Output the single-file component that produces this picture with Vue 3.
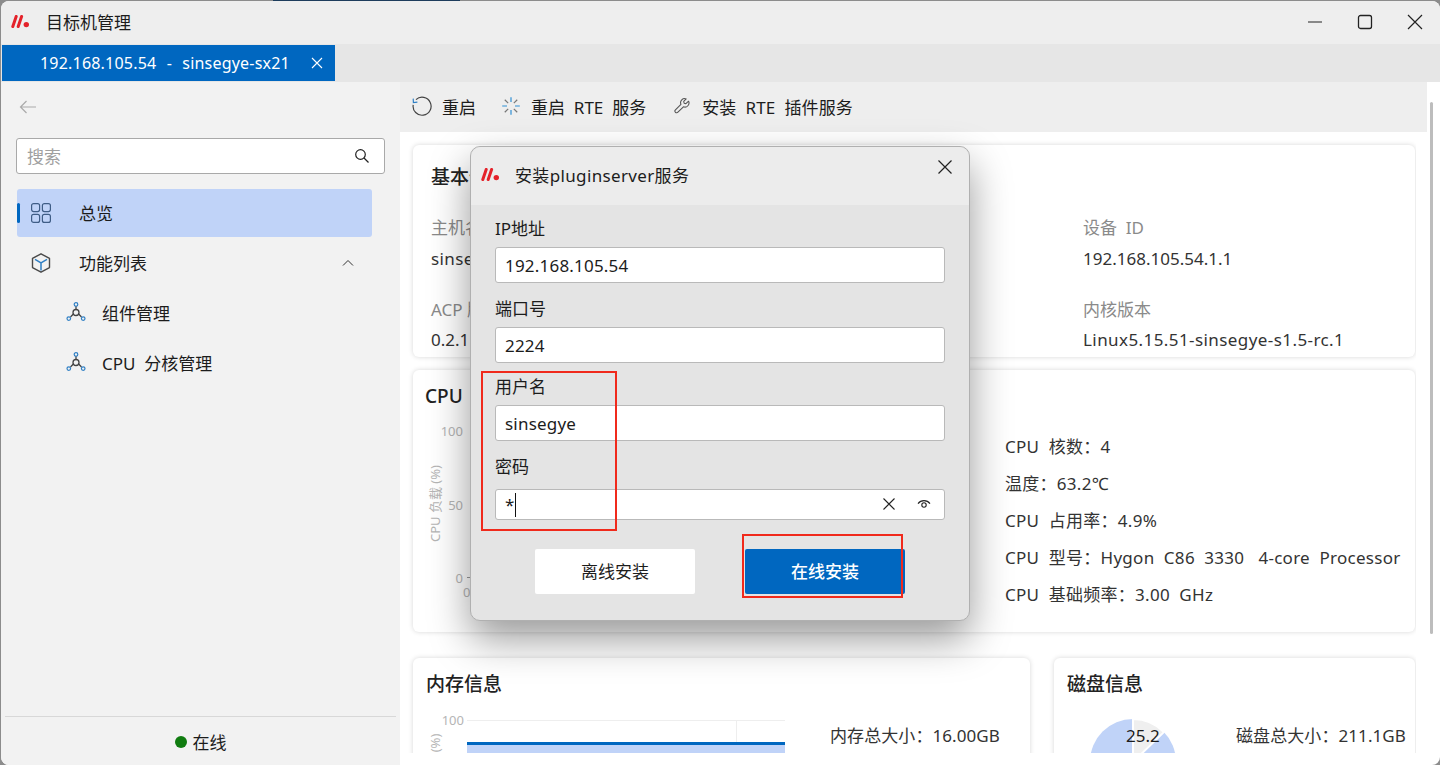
<script setup>
const tabLabel = '192.168.105.54  -  sinsegye-sx21'
const restartRte = '重启  RTE  服务'
const installRte = '安装  RTE  插件服务'
const sideSubs = ['组件管理', 'CPU  分核管理']
const basicLeft = [
  { label: '主机名称', value: 'sinsegye-sx21', wide: true },
  { label: 'ACP 版本', value: '0.2.1' },
]
const basicRight = [
  { label: '设备  ID', value: '192.168.105.54.1.1' },
  { label: '内核版本', value: 'Linux5.15.51-sinsegye-s1.5-rc.1', wide: true },
]
const cpuRows = [
  'CPU  核数\uff1a4',
  '温度\uff1a63.2℃',
  'CPU  占用率\uff1a4.9%',
  'CPU  型号\uff1aHygon  C86  3330   4-core  Processor',
  'CPU  基础频率\uff1a3.00  GHz',
]
const memStat = '内存总大小\uff1a16.00GB'
const diskStat = '磁盘总大小\uff1a211.1GB'
const rays = [0, 45, 90, 135, 180, 225, 270, 315]
</script>

<template>
  <div class="screen">
    <div class="taskedge"></div>
    <div class="window">
      <header class="titlebar">
        <svg class="logo" viewBox="0 0 18 13" width="18" height="13">
          <path d="M5.2 1.5L1.8 11.5M10.6 1.5L7.2 11.5" fill="none" stroke="#e4222a" stroke-width="3" stroke-linecap="round" />
          <circle cx="15.3" cy="9.6" r="2.7" fill="#e4222a" />
        </svg>
        <span class="apptitle">目标机管理</span>
        <div class="winctl">
          <svg viewBox="0 0 16 16" width="16" height="16"><path d="M1 8H15" stroke="#222" stroke-width="1.2" /></svg>
          <svg viewBox="0 0 16 16" width="16" height="16"><rect x="1.5" y="1.5" width="13" height="13" rx="2" fill="none" stroke="#222" stroke-width="1.3" /></svg>
          <svg viewBox="0 0 16 16" width="16" height="16"><path d="M1 1L15 15M15 1L1 15" stroke="#222" stroke-width="1.2" /></svg>
        </div>
      </header>

      <div class="tabbar">
        <div class="tab">
          <span class="tabtext">{{ tabLabel }}</span>
          <svg viewBox="0 0 12 12" width="12" height="12"><path d="M1 1L11 11M11 1L1 11" stroke="#fff" stroke-width="1.1" /></svg>
        </div>
      </div>

      <div class="body">
        <aside class="sidebar">
          <svg class="back" viewBox="0 0 18 14" width="18" height="14"><path d="M17 7H1.5M7.5 1L1.5 7L7.5 13" fill="none" stroke="#aaa" stroke-width="1.2" /></svg>
          <div class="search">
            <span class="placeholder">搜索</span>
            <svg viewBox="0 0 16 16" width="16" height="16"><circle cx="6.5" cy="6.5" r="4.8" fill="none" stroke="#222" stroke-width="1.2" /><path d="M10 10L14.5 14.5" stroke="#222" stroke-width="1.3" /></svg>
          </div>
          <div class="navitem active">
            <span class="indicator"></span>
            <svg class="navicon" viewBox="0 0 20 20" width="20" height="20">
              <rect x="0.6" y="0.6" width="8" height="8" rx="2" fill="none" stroke="#3f5d86" stroke-width="1.2" />
              <rect x="11.4" y="0.6" width="8" height="8" rx="2" fill="none" stroke="#3f5d86" stroke-width="1.2" />
              <rect x="0.6" y="11.4" width="8" height="8" rx="2" fill="none" stroke="#3f5d86" stroke-width="1.2" />
              <rect x="11.4" y="11.4" width="8" height="8" rx="2" fill="none" stroke="#3f5d86" stroke-width="1.2" />
            </svg>
            <span class="navtext">总览</span>
          </div>
          <div class="navitem">
            <svg class="navicon" viewBox="0 0 20 20" width="20" height="20">
              <path d="M10 0.8L18.5 5.4V14.6L10 19.2L1.5 14.6V5.4Z" fill="none" stroke="#4a4a4a" stroke-width="1.4" stroke-linejoin="round" />
              <path d="M4 6.4L10 10L16 6.4M10 10V17.5" fill="none" stroke="#2f7fc4" stroke-width="1.5" />
            </svg>
            <span class="navtext grow">功能列表</span>
            <svg class="chev" viewBox="0 0 12 8" width="12" height="8"><path d="M1 6.5L6 1.5L11 6.5" fill="none" stroke="#333" stroke-width="1" /></svg>
          </div>
          <div v-for="s in sideSubs" :key="s" class="subitem">
            <svg viewBox="0 0 20 20" width="20" height="20">
              <path d="M10 4V8M7.8 11.5L4.5 15M12.2 11.5L15.5 15" stroke="#444" stroke-width="1.3" />
              <circle cx="10" cy="10.5" r="3" fill="none" stroke="#444" stroke-width="1.3" />
              <circle cx="10" cy="2.4" r="1.8" fill="none" stroke="#2f7fc4" stroke-width="1.2" />
              <circle cx="2.8" cy="16.6" r="1.8" fill="none" stroke="#2f7fc4" stroke-width="1.2" />
              <circle cx="17.2" cy="16.6" r="1.8" fill="none" stroke="#2f7fc4" stroke-width="1.2" />
            </svg>
            <span>{{ s }}</span>
          </div>
          <div class="sidefoot">
            <span class="dot"></span><span>在线</span>
          </div>
        </aside>

        <main class="main">
          <div class="toolbar">
            <button class="tool">
              <svg viewBox="0 0 20 20" width="20" height="20">
                <path d="M4 3.6A9 9 0 1 1 1.2 8.8" fill="none" stroke="#444" stroke-width="1.2" />
                <path d="M1.2 2.6L1.4 6.6L5.4 6.2" fill="none" stroke="#2f7fc4" stroke-width="1.2" />
              </svg>
              <span>重启</span>
            </button>
            <button class="tool">
              <svg viewBox="0 0 20 20" width="20" height="20">
                <g v-for="(r, i) in rays" :key="r" :transform="`rotate(${r} 10 10)`">
                  <path d="M10 1.2V6" :stroke="i % 2 ? '#777' : '#2f8fd4'" stroke-width="1.2" />
                </g>
              </svg>
              <span>{{ restartRte }}</span>
            </button>
            <button class="tool">
              <svg class="wrench" viewBox="0 0 18 18" width="16" height="16">
                <path d="M16.4 3.6L13.4 6.4L11.4 5.8L10.9 3.8L13.7 1A4.6 4.6 0 0 0 7.8 7.1L1.6 13.3A1.9 1.9 0 0 0 4.4 16L10.6 9.9A4.6 4.6 0 0 0 16.4 3.6Z" fill="none" stroke="#555" stroke-width="1.2" stroke-linejoin="round" />
              </svg>
              <span class="tool-wide">{{ installRte }}</span>
            </button>
          </div>

          <div class="content">
            <section class="card basic">
              <h3 class="basic-title">基本信息</h3>
              <div class="basic-grid">
                <div class="col">
                  <div v-for="b in basicLeft" :key="b.label" class="kv">
                    <span class="k">{{ b.label }}</span><span class="v" :class="{ wide: b.wide }">{{ b.value }}</span>
                  </div>
                </div>
                <div class="col">
                  <div v-for="b in basicRight" :key="b.label" class="kv">
                    <span class="k">{{ b.label }}</span><span class="v" :class="{ wide: b.wide }">{{ b.value }}</span>
                  </div>
                </div>
              </div>
            </section>

            <section class="card cpu">
              <h3 class="cpu-title">CPU</h3>
              <div class="cpu-axis">
                <span class="ylabel">CPU 负载 (%)</span>
                <div class="ticks">
                  <span>100</span><span>50</span><span>0</span>
                </div>
                <i class="tick0"></i>
                <span class="x0">0</span>
              </div>
              <ul class="cpu-list">
                <li v-for="r in cpuRows" :key="r">{{ r }}</li>
              </ul>
            </section>

            <div class="lower">
              <section class="card mem">
                <h3>内存信息</h3>
                <div class="mem-row">
                  <div class="mem-axis"><span class="ylabel2">(%)</span><span class="t100">100</span></div>
                  <div class="plot"><span class="gridv"></span><div class="area"></div></div>
                  <div class="stat mem-stat">{{ memStat }}</div>
                </div>
              </section>
              <section class="card disk">
                <h3>磁盘信息</h3>
                <div class="disk-row">
                  <div class="pie">
                    <svg viewBox="0 0 90 90" width="90" height="90">
                      <circle cx="45" cy="45" r="43" fill="#c0d3f8" />
                      <path d="M45 45L45 2A43 43 0 0 1 75.9 15.1Z" fill="#efefef" stroke="#fff" stroke-width="2" stroke-linejoin="round" />
                    </svg>
                    <span class="pielabel">25.2</span>
                  </div>
                  <div class="stat">{{ diskStat }}</div>
                </div>
              </section>
            </div>
          </div>
          <div class="scrollthumb"></div>
        </main>
      </div>

      <div class="dialog">
        <div class="dlg-head">
          <svg viewBox="0 0 18 13" width="18" height="13">
            <path d="M5.2 1.5L1.8 11.5M10.6 1.5L7.2 11.5" fill="none" stroke="#e4222a" stroke-width="3" stroke-linecap="round" />
            <circle cx="15.3" cy="9.6" r="2.7" fill="#e4222a" />
          </svg>
          <span class="dlg-title">安装pluginserver服务</span>
          <svg class="dlg-close" viewBox="0 0 14 14" width="14" height="14"><path d="M0.5 0.5L13.5 13.5M13.5 0.5L0.5 13.5" stroke="#222" stroke-width="1.2" /></svg>
        </div>
        <div class="dlg-body">
          <label class="field f1"><span>IP地址</span><div class="input">192.168.105.54</div></label>
          <label class="field f2"><span>端口号</span><div class="input">2224</div></label>
          <label class="field f3"><span>用户名</span><div class="input">sinsegye</div></label>
          <label class="field f4"><span>密码</span>
            <div class="input pwd">
              <span>*</span><i class="caret"></i>
              <svg class="pwd-x" viewBox="0 0 12 12" width="12" height="12"><path d="M0.5 0.5L11.5 11.5M11.5 0.5L0.5 11.5" stroke="#222" stroke-width="1.1" /></svg>
              <svg class="pwd-eye" viewBox="0 0 14 10" width="14" height="10">
                <path d="M1 4.6C4 0.6 10 0.6 13 4.6" fill="none" stroke="#222" stroke-width="1.1" />
                <circle cx="7" cy="6" r="2.2" fill="none" stroke="#222" stroke-width="1.1" />
              </svg>
            </div>
          </label>
          <div class="dlg-actions">
            <button class="btn light">离线安装</button>
            <button class="btn primary">在线安装</button>
          </div>
        </div>
      </div>

      <div class="mark mark-form"></div>
      <div class="mark mark-btn"></div>
    </div>
  </div>
</template>

<style>
html, body { margin: 0; background: #8c8c8c; }
</style>

<style scoped>
* { box-sizing: border-box; }
.screen {
  width: 1440px; height: 765px; position: relative; overflow: hidden;
  background: #8c8c8c;
  font-family: "Noto Sans", "Noto Sans CJK SC", sans-serif;
  font-size: 17px; color: #1c1c1c; white-space: pre;
}
.taskedge { position: absolute; left: 273px; top: 0; width: 187px; height: 1px; background: #1d3c5c; z-index: 3; }
.window {
  position: absolute; inset: 1px 0 0 1px; border-radius: 8px; overflow: hidden;
  background: #fff; display: flex; flex-direction: column;
}
.titlebar { height: 43px; background: #eeeeee; display: flex; align-items: center; padding: 0 0 2px 10px; flex: none; }
.apptitle { margin-left: 17px; }
.winctl { margin-left: auto; display: flex; gap: 34px; padding-right: 17px; }
.tabbar { height: 38px; background: #e6e6e6; flex: none; padding: 1px 0 0 1px; }
.tab { width: 333px; height: 36px; background: #0067c0; color: #fff; display: flex; align-items: center; padding-left: 38px; font-size: 16px; letter-spacing: .2px; word-spacing: .8px; }
.tabtext { width: 271px; }
.body { flex: 1; display: flex; min-height: 0; }
.sidebar { width: 399px; background: #f2f2f2; display: flex; flex-direction: column; position: relative; padding: 0 0 0 15px; flex: none; }
.back { margin: 18px 0 0 3px; display: block; }
.search { width: 369px; height: 36px; margin-top: 24px; background: #fff; border: 1px solid #a9a9a9; border-radius: 3px; display: flex; align-items: center; justify-content: space-between; padding: 0 14px 0 10px; }
.placeholder { color: #a0a0a0; margin-bottom: 2px; }
.navitem { width: 355px; height: 48px; display: flex; align-items: center; position: relative; margin-left: 1px; padding-left: 14px; margin-top: 2px; }
.navitem.active { background: #c0d3f8; border-radius: 3px; margin-top: 15px; }
.navtext { margin-bottom: 2px; }
.indicator { position: absolute; left: 0; top: 14px; width: 3px; height: 20px; background: #0067c0; border-radius: 2px; }
.navicon { margin-right: 28px; }
.grow { flex: 1; }
.chev { margin-right: 18px; }
.subitem { height: 50px; display: flex; align-items: center; gap: 16px; padding-left: 50px; }
.sidefoot { position: absolute; left: 4px; right: 4px; bottom: 0; height: 49px; border-top: 1px solid #d8d8d8; display: flex; align-items: center; justify-content: center; gap: 6px; padding-top: 1px; }
.dot { width: 12px; height: 12px; border-radius: 50%; background: #107c10; }
.main { flex: 1; position: relative; overflow: hidden; }
.toolbar { height: 50px; width: 1027px; background: #eeeeee; display: flex; align-items: center; padding: 0 0 2px 12px; }
.tool { all: unset; display: flex; align-items: center; gap: 10px; margin-right: 25px; font-size: 17px; color: #1c1c1c; white-space: pre; }
.wrench { margin: 0 2px 0 3px; }
.tool-wide { letter-spacing: .12px; }
.content { padding: 13px 0 0 13px; width: 1016px; height: 621px; overflow: hidden; }
.card { background: #fff; border-radius: 6px; box-shadow: 0 0 5px rgba(0,0,0,.16); }
h3 { margin: 0; font-size: 19px; line-height: 26px; font-weight: 500; color: #222; }
.basic { width: 1002px; height: 212px; padding: 19px 18px 0; }
.basic-grid { display: grid; grid-template-columns: 652px 1fr; margin-top: 27px; }
.col { display: flex; flex-direction: column; gap: 29px; }
.kv { display: flex; flex-direction: column; gap: 8px; }
.kv:first-child { gap: 9px; }
.k { color: #8a8a8a; line-height: 22px; }
.v { color: #333; line-height: 22px; }
.v.wide { letter-spacing: .42px; }
.cpu { width: 1002px; height: 262px; margin-top: 13px; position: relative; padding: 13px 12px 0; display: block; }
.cpu-axis { position: absolute; left: 12px; top: 52px; width: 38px; height: 165px; }
.ylabel { position: absolute; left: -34px; top: 72px; transform: rotate(-90deg); font-size: 13px; color: #b5b5b5; width: 86px; text-align: center; }
.ticks { position: absolute; right: 0; top: 0; bottom: 0; display: flex; flex-direction: column; justify-content: space-between; align-items: flex-end; font-size: 13px; color: #b5b5b5; }
.tick0 { position: absolute; left: 42px; top: 155px; width: 4px; height: 1px; background: #999; }
.x0 { position: absolute; left: 38px; top: 161px; font-size: 13px; color: #b5b5b5; }
.cpu-list { position: absolute; left: 592px; top: 66px; margin: 0; padding: 0; list-style: none; display: flex; flex-direction: column; gap: 15px; }
.cpu-list li { line-height: 22px; color: #333; letter-spacing: .28px; }
.lower { display: flex; gap: 24px; margin-top: 26px; }
.mem { width: 617px; height: 200px; padding: 13px 13px 0; position: relative; }
.disk { width: 361px; height: 200px; padding: 13px 13px 0; position: relative; }
.mem-row { position: relative; margin-top: 23px; display: flex; }
.mem-axis { width: 41px; height: 100px; position: relative; }
.t100 { position: absolute; right: 3px; top: -9px; font-size: 13px; color: #b5b5b5; }
.ylabel2 { position: absolute; left: 0; top: 14px; transform: rotate(-90deg); font-size: 13px; color: #b5b5b5; }
.plot { width: 318px; height: 100px; position: relative; border-top: 1px solid #eee; }
.gridv { position: absolute; left: 269px; top: 0; bottom: 0; width: 1px; background: #eee; }
.area { position: absolute; left: 0; right: 0; top: 21px; bottom: 0; background: #c0d3f8; border-top: 3px solid #0067c0; }
.stat { color: #333; line-height: 22px; white-space: pre; letter-spacing: .08px; }
.mem-stat { margin-left: 45px; margin-top: 5px; }
.disk-row { display: flex; margin-top: 17px; position: relative; }
.pie { position: relative; width: 90px; height: 90px; margin-left: 21px; margin-top: 3px; }
.pielabel { position: absolute; left: 38px; top: 8px; line-height: 22px; }
.disk-row .stat { margin-left: 58px; margin-top: 11px; }
.scrollthumb { position: absolute; right: 7px; top: 20px; width: 3px; height: 532px; border-radius: 2px; background: #bdbdbd; }

.dialog { position: absolute; left: 469px; top: 145px; width: 500px; height: 475px; border: 1px solid #b0b0b0; border-radius: 10px; background: #e4e4e4; box-shadow: 0 18px 40px rgba(0,0,0,.4); }
.dlg-head { height: 58px; background: #ececec; border-radius: 10px 10px 0 0; display: flex; align-items: center; padding: 0 0 3px 10px; position: relative; }
.dlg-title { margin-left: 16px; letter-spacing: .35px; }
.dlg-close { position: absolute; right: 17px; top: 13px; }
.dlg-body { padding: 13px 24px 0; }
.field { display: flex; flex-direction: column; }
.field > span { line-height: 22px; }
.input { width: 450px; height: 36px; margin-top: 7px; background: #fff; border: 1px solid #b9b9b9; border-radius: 3px; display: flex; align-items: center; padding-left: 9px; letter-spacing: .2px; }
.f2 { margin-top: 15px; }
.f3 { margin-top: 13px; }
.f4 { margin-top: 15px; }
.pwd { height: 31px; margin-top: 11px; position: relative; }
.caret { width: 1px; height: 24px; background: #111; margin-left: 0; }
.pwd-x { position: absolute; right: 49px; top: 8px; }
.pwd-eye { position: absolute; right: 13px; top: 9px; }
.dlg-actions { display: flex; gap: 50px; margin-top: 29px; padding-left: 40px; }
.btn { all: unset; width: 160px; height: 45px; border-radius: 2px; text-align: center; line-height: 45px; font-size: 17px; }
.btn.light { background: #fff; color: #1c1c1c; }
.btn.primary { background: #0067c0; color: #fff; font-weight: 500; }

.mark { position: absolute; border: 2px solid #f02a1c; pointer-events: none; }
.mark-form { left: 480px; top: 370px; width: 136px; height: 160px; }
.mark-btn { left: 741px; top: 533px; width: 161px; height: 64px; }
</style>
